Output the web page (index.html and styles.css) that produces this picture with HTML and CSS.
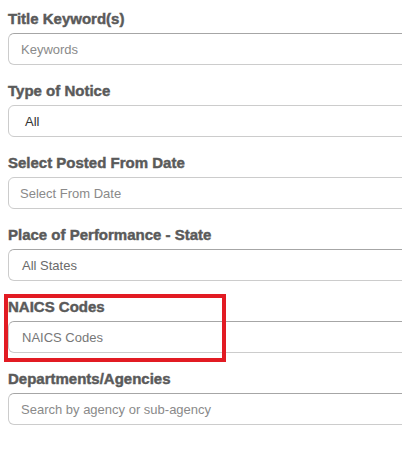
FILE: index.html
```html
<!DOCTYPE html>
<html>
<head>
<meta charset="utf-8">
<link rel="stylesheet" href="styles.css">
</head>
<body>
<div class="page">
  <form class="filters">
    <div class="field">
      <label class="label">Title Keyword(s)</label>
      <div class="control control-dark"><span class="ph">Keywords</span></div>
    </div>
    <div class="field">
      <label class="label">Type of Notice</label>
      <div class="control control-select"><span class="val">All</span></div>
    </div>
    <div class="field">
      <label class="label">Select Posted From Date</label>
      <div class="control control-date"><span class="ph">Select From Date</span></div>
    </div>
    <div class="field">
      <label class="label">Place of Performance - State</label>
      <div class="control control-dark control-state"><span class="val-gray">All States</span></div>
    </div>
    <div class="field field-highlight">
      <label class="label">NAICS Codes</label>
      <div class="control control-dark control-naics"><span class="ph-dark">NAICS Codes</span></div>
      <div class="highlight-box"></div>
    </div>
    <div class="field">
      <label class="label">Departments/Agencies</label>
      <div class="control control-dark"><span class="ph">Search by agency or sub-agency</span></div>
    </div>
  </form>
</div>
</body>
</html>
```
FILE: styles.css
```css
html, body {
  margin: 0;
  padding: 0;
  background: #ffffff;
  overflow: hidden;
}
.page {
  width: 402px;
  height: 456px;
  overflow: hidden;
}
.filters {
  padding: 10px 0 0 8px;
  width: 440px;
  display: flex;
  flex-direction: column;
  gap: 17px;
}
.field {
  display: flex;
  flex-direction: column;
  gap: 5px;
}
.field-highlight {
  position: relative;
}
.label {
  display: block;
  height: 18px;
  font-family: "Liberation Sans", Arial, sans-serif;
  font-weight: bold;
  font-size: 15px;
  line-height: 18px;
  color: #5a5a5a;
  -webkit-text-stroke: 0.45px #5a5a5a;
}
.control {
  box-sizing: border-box;
  height: 32px;
  border: 1px solid #cccccc;
  border-radius: 6px;
  padding-left: 12px;
  display: flex;
  align-items: center;
  font-family: "Liberation Sans", Arial, sans-serif;
  font-size: 13px;
}
.control-dark {
  border-top-color: #a6a6a6;
}
.control-select {
  padding-left: 16px;
}
.control-date {
  padding-left: 11px;
}
.control-state,
.control-naics {
  padding-left: 13px;
}
.ph {
  color: #8a8a8a;
}
.ph-dark {
  color: #777777;
}
.val {
  color: #333333;
}
.val-gray {
  color: #6a6a6a;
}
.highlight-box {
  position: absolute;
  left: -4px;
  top: -4px;
  width: 222px;
  height: 68px;
  box-sizing: border-box;
  border: 4px solid #e21b23;
  pointer-events: none;
}
```
